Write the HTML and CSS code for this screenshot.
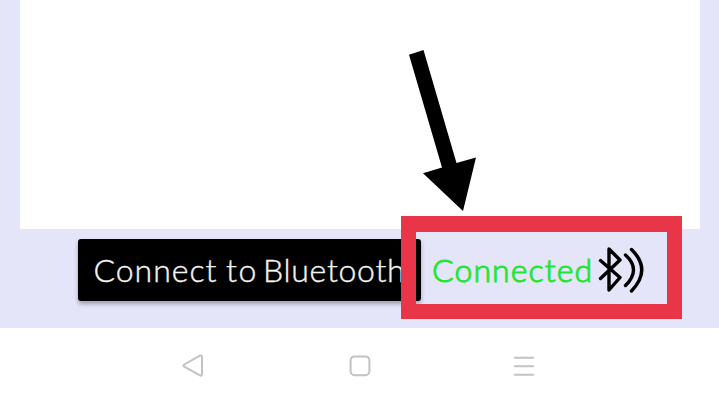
FILE: index.html
```
<!DOCTYPE html>
<html lang="en">
<head>
<meta charset="utf-8">
<title>Bluetooth</title>
<link rel="stylesheet" href="styles.css">
</head>
<body>
<div class="screen">
  <main class="app">
    <section class="canvas"></section>
    <div class="controls">
      <button class="connect"><span class="w1">Connect</span><span class="w2">to</span><span class="w3">Bluetooth</span></button>
      <span class="status">Connected</span>
      <svg class="bt" width="50" height="50" viewBox="0 0 50 50">
        <path d="M3.5 15.5 23 32.5 12 45V4L23 15 3.5 33.5" /><path d="M28.5 10Q44.5 24.5 28.5 40.5M34.5 4.5Q55 24.5 34.5 46"/>
      </svg>
    </div>
  </main>
  <nav class="nav">
    <svg width="24" height="24" viewBox="0 0 24 24"><path d="M3.2 10.5 18.5 1.8Q21 .8 21 3.2V20Q21 22.6 18.5 21.2L3.2 12.7Q1.6 11.6 3.2 10.5Z"/></svg>
    <svg width="24" height="24" viewBox="0 0 24 24"><rect x="2.6" y="2.4" width="18.8" height="18.8" rx="4"/></svg>
    <svg width="24" height="24" viewBox="0 0 24 24"><path d="M2 3.8H22M2 12.3H22M2 20.8H22"/></svg>
  </nav>
  <div class="highlight"></div>
  <svg class="arrow" width="90" height="180" viewBox="0 0 90 180"><path d="M9 14.7 23.5 10 56.5 123 76 117.5 63 171 23 133.3 42 127.5Z"/></svg>
</div>
</body>
</html>
```
FILE: styles.css
```
body { margin: 0; background: #fff; }
.screen { position: relative; width: 719px; height: 403px; overflow: hidden; font-family: Lato, "Open Sans", sans-serif; }
.app { height: 328px; background: #e4e5f9; display: flex; flex-direction: column; }
.canvas { height: 229px; margin: 0 19px 0 20px; background: #fff; }
.controls { display: flex; align-items: center; height: 62px; margin: 10px 0 0 78px; }
.connect { box-sizing: border-box; width: 343px; height: 62px; padding: 0 0 0 12px; border: 0; border-radius: 3px; background: #000; color: #f4f4f0; display: flex; align-items: center; font: 300 32px/62px Lato, "Open Sans", sans-serif; white-space: nowrap; box-shadow: 0 3px 4px rgba(0,0,0,.3); -webkit-text-stroke: .4px #f4f4f0; }
.w1 { width: 131px; letter-spacing: 1px; }
.w2 { width: 42px; letter-spacing: 1.5px; }
.w3 { letter-spacing: .7px; }
.status { width: 165px; margin-left: 11px; color: #24e534; font-size: 32px; font-weight: 300; line-height: 62px; letter-spacing: 1.1px; -webkit-text-stroke: 1px #24e534; }
.bt { flex: none; fill: none; stroke: #000; stroke-width: 3.4; stroke-linecap: round; stroke-linejoin: round; }
.nav { height: 75px; display: grid; grid-template-columns: 24px 24px 24px; column-gap: 141.5px; padding: 26px 0 0 181px; box-sizing: border-box; }
.nav svg { fill: none; stroke: #c2c2c2; stroke-width: 2; }
.nav svg:nth-child(2) { margin-left: 1.5px; }
.highlight { position: absolute; left: 401px; top: 216px; width: 281px; height: 103px; box-sizing: border-box; border: 15px solid #e93548; border-top-width: 16px; }
.arrow { position: absolute; left: 400px; top: 40px; fill: #000; }
```
